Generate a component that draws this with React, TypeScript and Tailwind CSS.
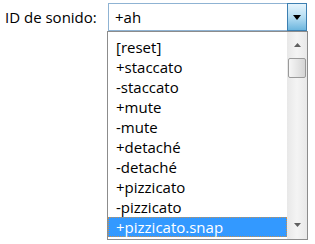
const items = [
  "[reset]",
  "+staccato",
  "-staccato",
  "+mute",
  "-mute",
  "+detaché",
  "-detaché",
  "+pizzicato",
  "-pizzicato",
  "+pizzicato.snap",
];

const selected = 9;

export default function App() {
  return (
    <div className="relative w-[315px] h-[244px] bg-white font-['Open_Sans',sans-serif] text-[15px] text-black leading-none">
      <div className="flex items-start pt-[3px]">
        <div className="w-[108px] pl-[5px] h-[28px] flex items-center">
          ID de sonido:
        </div>

        {/* combobox */}
        <div className="flex w-[199px] h-[28px] border border-[#8fb3d3] bg-white">
          <div className="flex-1 flex items-center pl-[6px]">+ah</div>
          <div className="w-[20px] -my-px -mr-px border border-[#3c7fb1] bg-gradient-to-b from-[#e5f4fc] via-[#b6def3] to-[#6cb6de] flex items-center justify-center">
            <svg width="8" height="5" viewBox="0 0 8 5">
              <path d="M0 0H8L4 5Z" fill="#000" />
            </svg>
          </div>
        </div>
      </div>

      {/* dropdown list */}
      <div className="absolute left-[107px] top-[31px] w-[201px] h-[209px] border border-[#8c8c8c] bg-white flex">
        <div className="flex-1 pt-[5px]">
          {items.map((it, i) => (
            <div
              key={it}
              className={
                i === selected
                  ? "h-[20px] flex items-center pl-[7px] bg-[#3399ff] text-white border border-dotted border-[#c8904f]"
                  : "h-[20px] flex items-center pl-[8px]"
              }
            >
              {it}
            </div>
          ))}
        </div>

        {/* scrollbar */}
        <div className="w-[20px] bg-gradient-to-r from-[#e8e8e8] via-[#f4f4f4] to-[#e8e8e8] flex flex-col items-center">
          <div className="h-[24px] w-full flex items-center justify-center pt-[2px]">
            <svg width="7" height="4" viewBox="0 0 7 4">
              <path d="M0 4H7L3.5 0Z" fill="#606060" />
            </svg>
          </div>
          <div className="w-[18px] h-[20px] mt-[2px] rounded-[2px] border border-[#9a9a9a] bg-gradient-to-r from-[#f6f6f6] via-[#e6e6e6] to-[#d4d4d4]" />
          <div className="flex-1" />
          <div className="h-[24px] w-full flex items-center justify-center pb-[4px]">
            <svg width="7" height="4" viewBox="0 0 7 4">
              <path d="M0 0H7L3.5 4Z" fill="#606060" />
            </svg>
          </div>
        </div>
      </div>
    </div>
  );
}
